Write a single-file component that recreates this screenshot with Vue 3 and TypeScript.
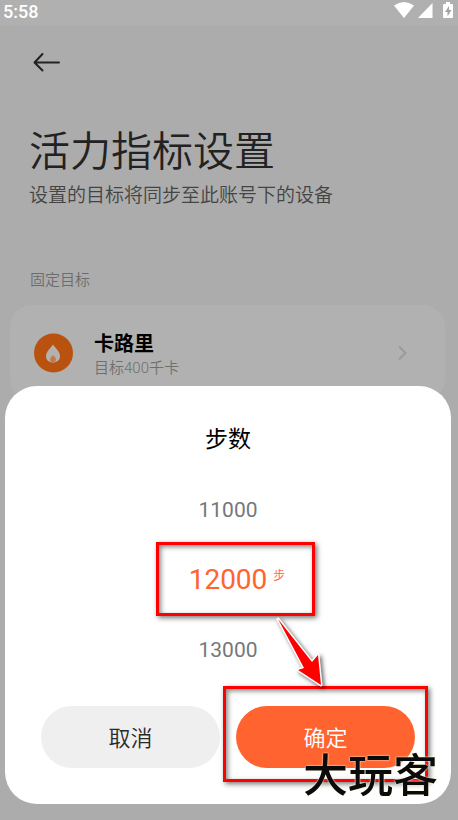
<script setup lang="ts">
import { ref } from 'vue'

const steps: number[] = [11000, 12000, 13000]
const selected = ref<number>(12000)
</script>

<template>
  <div class="screen">
    <div class="status">
      <span>5:58</span>
      <svg class="status-icons" width="60" height="20" viewBox="0 0 60 20" aria-hidden="true">
        <path d="M0 5.500Q10-1.500 20 5.500L10 18Z" fill="#fff" />
        <path d="M38.500 3V18H24Z" fill="#fff" />
        <path d="M52 2h4v2h2q1 0 1 1v12q0 1-1 1h-8q-1 0-1-1V5q0-1 1-1h2Z" fill="#fff" />
        <path d="M55 6 51 12h2.500v4.500L57.500 10h-2.500Z" fill="#a4a4a4" />
      </svg>
    </div>

    <header class="top">
      <button class="back" type="button" aria-label="返回">
        <svg width="28" height="20" viewBox="0 0 28 20" aria-hidden="true">
          <path d="M9.500 2 1.500 10.500 9.500 18.500M2 10.500H26" fill="none" stroke="#222" stroke-width="2" stroke-linecap="round" stroke-linejoin="round" />
        </svg>
      </button>
      <h1>活力指标设置</h1>
      <p>设置的目标将同步至此账号下的设备</p>
    </header>

    <h2 class="section">固定目标</h2>
    <a class="card" href="#calories">
      <svg width="40" height="40" viewBox="0 0 40 40" aria-hidden="true">
        <circle cx="20.500" cy="20" r="19.500" fill="#b9520f" />
        <path d="M20 11.500C22 15 27 18 27 23.500C27 27 24 29.500 20 29.500C16 29.500 13 27 13 23.500C13 18 18 15 20 11.500Z" fill="#b5b1ae" />
        <path d="M20 22C21 23.500 23 24.500 23 26.500C23 28.500 21.500 29.500 20 29.500C18.500 29.500 17 28.500 17 26.500C17 24.500 19 23.500 20 22Z" fill="#c17b4c" />
      </svg>
      <span class="card-text">
        <strong>卡路里</strong>
        <span>目标400千卡</span>
      </span>
      <svg width="10" height="16" viewBox="0 0 10 16" aria-hidden="true">
        <path d="M1 1.500 7.500 8 1 14.500" fill="none" stroke="#9a9a9a" stroke-width="2" />
      </svg>
    </a>

    <section class="sheet" role="dialog" aria-labelledby="sheet-title">
      <h2 id="sheet-title">步数</h2>
      <ul class="wheel" role="listbox" aria-labelledby="sheet-title">
        <li
          v-for="step in steps"
          :key="step"
          role="option"
          :aria-selected="step === selected"
          :class="{ current: step === selected }"
          @click="selected = step"
        >
          <span class="value">{{ step }}<sup v-if="step === selected">步</sup></span>
          <template v-if="step === selected">
            <i class="frame frame-value"></i>
            <svg class="pointer" width="60" height="84" viewBox="0 0 60 84" aria-hidden="true">
              <path d="M8 6 42 49 48 42 51 72 28 57 34 55Z" fill="#f00" stroke="#fff" stroke-width="3" stroke-linejoin="round" paint-order="stroke" />
            </svg>
          </template>
        </li>
      </ul>
      <div class="actions">
        <button type="button">取消</button>
        <div class="confirm">
          <button class="primary" type="button">确定</button>
          <i class="frame frame-confirm"></i>
        </div>
      </div>
      <span class="mark">大玩客</span>
    </section>
  </div>
</template>

<style>
body {
  background: #acacac;
}
</style>

<style scoped>
.screen {
  min-height: 100vh;
  background: #acacac;
  color: #222;
  font-family: Roboto, "Noto Sans CJK SC", sans-serif;
  font-weight: 350;
}

.status {
  display: flex;
  justify-content: space-between;
  height: 26px;
  padding: 0 4px 0 3px;
  background: #b0b0b0;
  color: #fff;
  font-size: 18px;
  font-weight: 500;
  line-height: 24px;
}

h1,
h2,
p,
ul {
  margin: 0;
  padding: 0;
  font-weight: inherit;
}

button {
  border: 0;
  padding: 0;
  font: inherit;
  cursor: pointer;
}

.top {
  padding: 24px 29px 0;
}

.back {
  display: flex;
  align-items: center;
  height: 24px;
  padding-left: 4px;
  background: none;
}

h1 {
  margin-top: 48px;
  font-size: 41px;
  line-height: 60px;
}

.top p {
  color: #444;
  font-size: 19px;
  line-height: 28px;
}

.section {
  margin-top: 56px;
  padding: 0 30px;
  color: #6c6c6c;
  font-size: 15px;
  line-height: 28px;
}

.card {
  display: flex;
  align-items: center;
  height: 96px;
  margin: 11px 13px 0 10px;
  padding: 0 37px 0 23px;
  box-sizing: border-box;
  border-radius: 22px;
  background: #b1b1b1;
  color: #707070;
  text-decoration: none;
}

.card-text {
  display: flex;
  flex: 1;
  flex-direction: column;
  padding: 5px 0 0 21px;
  font-size: 15px;
  line-height: 24px;
}

.card-text strong {
  color: #000;
  font-size: 20px;
  font-weight: 700;
}

.sheet {
  position: fixed;
  right: 7px;
  bottom: 16px;
  left: 5px;
  padding: 36px;
  border-radius: 32px;
  background: #fff;
}

.sheet h2 {
  color: #000;
  font-size: 23px;
  font-weight: 400;
  line-height: 36px;
  text-align: center;
}

.wheel {
  margin-top: 17px;
  list-style: none;
  color: #777;
  font-size: 21px;
  font-weight: 400;
  line-height: 70px;
  text-align: center;
}

.wheel li {
  position: relative;
  height: 70px;
  cursor: pointer;
}

.wheel .current {
  z-index: 1;
  color: #ff6430;
  font-size: 28px;
}

.value {
  position: relative;
}

.value sup {
  position: absolute;
  top: 0;
  left: 100%;
  padding-left: 6px;
  font-size: 12px;
  font-weight: 350;
  line-height: 26px;
}

.frame {
  position: absolute;
  box-sizing: border-box;
  border: 3px solid #f00;
  box-shadow: 2px 2px 5px #0008, inset 2px 2px 5px #0007;
  pointer-events: none;
}

.frame-value {
  top: -3px;
  left: calc(50% - 72px);
  width: 159px;
  height: 74px;
}

.pointer {
  position: absolute;
  top: 68px;
  left: calc(50% + 42px);
  filter: drop-shadow(2px 2px 2px #0009);
  pointer-events: none;
}

.actions {
  display: grid;
  grid-template-columns: 1fr 1fr;
  gap: 16px;
  margin-top: 21px;
}

.actions button {
  width: 100%;
  height: 62px;
  padding-bottom: 2px;
  border-radius: 31px;
  background: #efefef;
  color: #2a2a2a;
  font-size: 22px;
}

.confirm {
  position: relative;
}

.actions .primary {
  background: #ff6430;
  color: #fff;
}

.frame-confirm {
  inset: -20px -13px -14px;
}

.mark {
  position: absolute;
  right: 13px;
  bottom: 8px;
  color: #0b0b0b;
  font-size: 45px;
  font-weight: 500;
  line-height: 38px;
  text-shadow: 0 0 1px #fff8d8, 0 0 2px #fff8d8;
  pointer-events: none;
}
</style>
